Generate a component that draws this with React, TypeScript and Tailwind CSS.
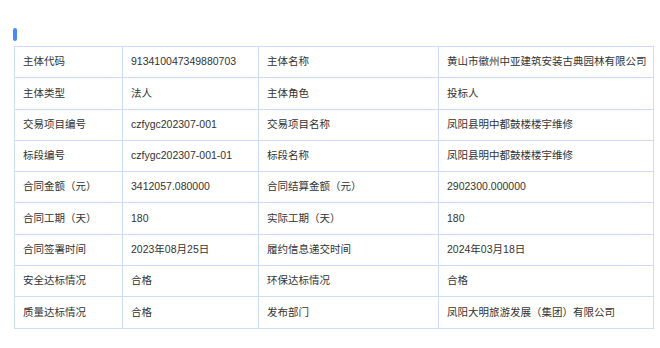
const rows: [string, string, string, string][] = [
  ['主体代码', '913410047349880703', '主体名称', '黄山市徽州中亚建筑安装古典园林有限公司'],
  ['主体类型', '法人', '主体角色', '投标人'],
  ['交易项目编号', 'czfygc202307-001', '交易项目名称', '凤阳县明中都鼓楼楼宇维修'],
  ['标段编号', 'czfygc202307-001-01', '标段名称', '凤阳县明中都鼓楼楼宇维修'],
  ['合同金额（元）', '3412057.080000', '合同结算金额（元）', '2902300.000000'],
  ['合同工期（天）', '180', '实际工期（天）', '180'],
  ['合同签署时间', '2023年08月25日', '履约信息递交时间', '2024年03月18日'],
  ['安全达标情况', '合格', '环保达标情况', '合格'],
  ['质量达标情况', '合格', '发布部门', '凤阳大明旅游发展（集团）有限公司'],
];

export default function App() {
  return (
    <div
      className="w-[660px] h-[348px] bg-white pl-[13px] pt-[28px] text-[10.5px] text-[#333]"
      style={{ fontFamily: '"Liberation Sans", "Noto Sans CJK SC", sans-serif' }}
    >
      <div className="w-[4px] h-[13px] rounded-full bg-[#4b8bf5]" />
      <table className="mt-[5px] ml-px w-[639px] border-collapse border border-[#cfdcf8] table-fixed">
        <colgroup>
          <col className="w-[108px]" />
          <col className="w-[136px]" />
          <col className="w-[180px]" />
          <col className="w-[215px]" />
        </colgroup>
        <tbody>
          {rows.map((r, i) => (
            <tr key={i} className="h-[31.3px]">
              {r.map((c, j) => (
                <td key={j} className="border border-[#cfdcf8] pl-[8px] pr-[4px] py-0 align-middle whitespace-nowrap">
                  {c}
                </td>
              ))}
            </tr>
          ))}
        </tbody>
      </table>
    </div>
  );
}
